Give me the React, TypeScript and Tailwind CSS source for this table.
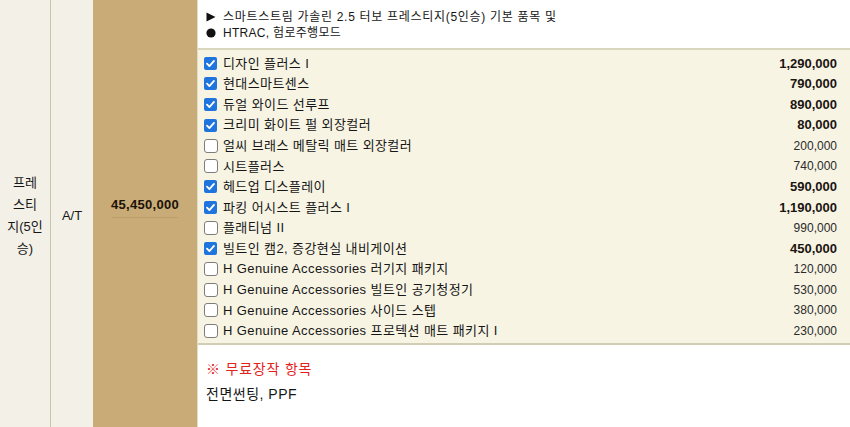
import React from 'react';

type Option = { name: string; price: string; checked: boolean };

const options: Option[] = [
  { name: '디자인 플러스 I', price: '1,290,000', checked: true },
  { name: '현대스마트센스', price: '790,000', checked: true },
  { name: '듀얼 와이드 선루프', price: '890,000', checked: true },
  { name: '크리미 화이트 펄 외장컬러', price: '80,000', checked: true },
  { name: '얼씨 브래스 메탈릭 매트 외장컬러', price: '200,000', checked: false },
  { name: '시트플러스', price: '740,000', checked: false },
  { name: '헤드업 디스플레이', price: '590,000', checked: true },
  { name: '파킹 어시스트 플러스 I', price: '1,190,000', checked: true },
  { name: '플래티넘 II', price: '990,000', checked: false },
  { name: '빌트인 캠2, 증강현실 내비게이션', price: '450,000', checked: true },
  { name: 'H Genuine Accessories 러기지 패키지', price: '120,000', checked: false },
  { name: 'H Genuine Accessories 빌트인 공기청정기', price: '530,000', checked: false },
  { name: 'H Genuine Accessories 사이드 스텝', price: '380,000', checked: false },
  { name: 'H Genuine Accessories 프로텍션 매트 패키지 I', price: '230,000', checked: false },
];

function Box({ checked }: { checked: boolean }) {
  if (checked) {
    return (
      <span className="flex h-[13px] w-[13px] shrink-0 items-center justify-center rounded-[2px] bg-[#1f74dd]">
        <svg viewBox="0 0 12 12" className="h-[11px] w-[11px]">
          <path d="M2.2 6.2 L4.8 8.8 L9.8 3.2" fill="none" stroke="#fff" strokeWidth="2" strokeLinecap="round" strokeLinejoin="round" />
        </svg>
      </span>
    );
  }
  return <span className="h-[14px] w-[14px] shrink-0 rounded-[3px] border border-[#7d7d7d] bg-white" />;
}

export default function App() {
  return (
    <div
      className="flex h-[427px] w-[850px] overflow-hidden bg-white text-[#161616]"
      style={{ fontFamily: '"Liberation Sans", "Noto Sans CJK KR", sans-serif' }}
    >
      {/* trim name */}
      <div className="flex w-[51px] shrink-0 items-center justify-center border-r border-[#c6c9a9] bg-[#f2f0e7] pt-[5px] text-center text-[13px] leading-[22px]">
        <span>
          프레
          <br />
          스티
          <br />
          지(5인
          <br />
          승)
        </span>
      </div>

      {/* transmission */}
      <div className="flex w-[42px] shrink-0 items-center justify-center bg-[#f2f0e7] pt-[5px] text-[13px]">
        A/T
      </div>

      {/* base price */}
      <div className="flex w-[104px] shrink-0 flex-col items-center justify-center bg-[#c8ab77] pb-[14px]">
        <span className="text-[13px] font-bold tracking-[0.3px] text-[#1b1208]">45,450,000</span>
        <span className="mt-[3px] h-px w-[66px] bg-[#bba06e]" />
      </div>

      {/* options */}
      <div className="flex flex-1 flex-col border-l border-[#e0dcc6]">
        <div className="h-[50px] shrink-0 border-b-2 border-[#dad6bb] bg-white pl-[8px] pt-[9px] text-[12px] leading-[16px] tracking-[0.7px]">
          <div className="flex items-center">
            <svg viewBox="0 0 10 10" className="mr-[7px] h-[10px] w-[10px]">
              <path d="M0.5 0.5 L9.5 5 L0.5 9.5 Z" fill="#111" />
            </svg>
            <span>스마트스트림 가솔린 2.5 터보 프레스티지(5인승) 기본 품목 및</span>
          </div>
          <div className="flex items-center">
            <svg viewBox="0 0 10 10" className="mr-[7px] h-[10px] w-[10px]">
              <circle cx="5" cy="5" r="4.6" fill="#111" />
            </svg>
            <span className="tracking-[0.3px]">HTRAC, 험로주행모드</span>
          </div>
        </div>

        <div className="h-[295px] shrink-0 border-b-2 border-[#d2ceb3] bg-[#f7f4e4] pl-[6px] pr-[13px] pt-[3px]">
          {options.map((o) => (
            <div key={o.name} className="flex h-[20.6px] items-center">
              <Box checked={o.checked} />
              <span className={`flex-1 text-[13px] tracking-[0.4px] ${o.checked ? 'ml-[6px]' : 'ml-[5px]'}`}>{o.name}</span>
              {o.checked ? (
                <span className="text-[13px] font-bold text-[#1b1410]">{o.price}</span>
              ) : (
                <span className="text-[12px] text-[#2a2a2a]">{o.price}</span>
              )}
            </div>
          ))}
        </div>

        <div className="flex-1 bg-white pl-[8px] pt-[15px]">
          <div className="text-[14px] leading-[18px] tracking-[0.8px] text-[#e4221c]">※ 무료장작 항목</div>
          <div className="mt-[7px] text-[14px] leading-[18px] tracking-[0.5px]">전면썬팅, PPF</div>
        </div>
      </div>
    </div>
  );
}
